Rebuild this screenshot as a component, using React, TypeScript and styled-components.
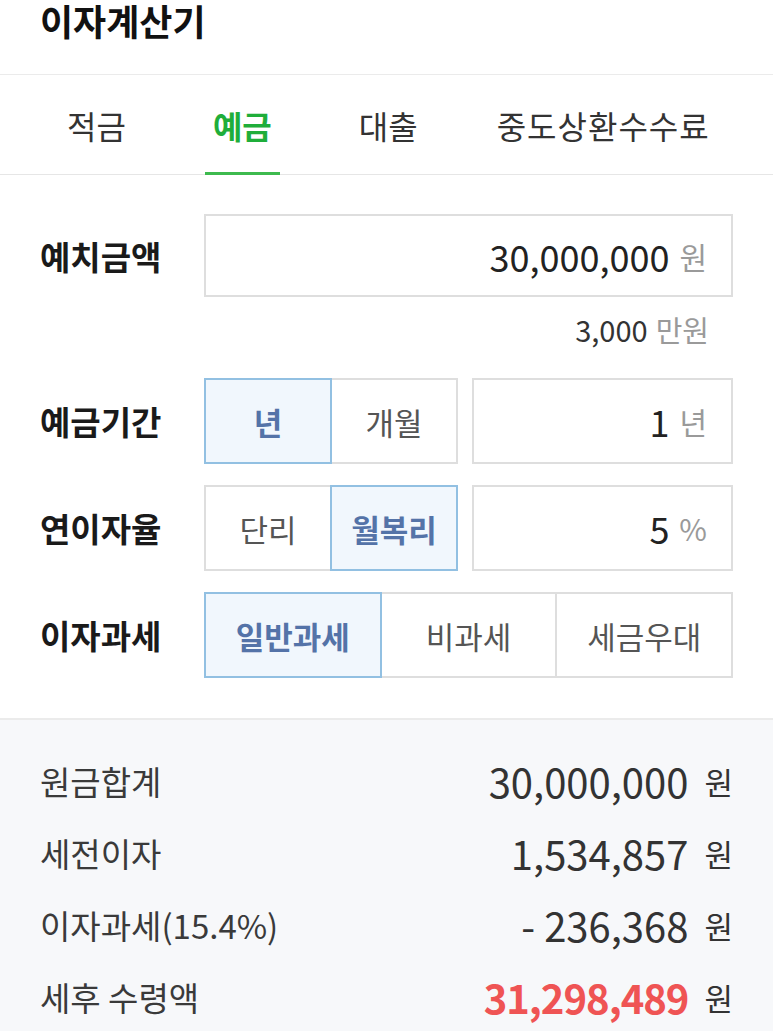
import React, { useState } from 'react';
import styled, { createGlobalStyle, css } from 'styled-components';

const GlobalStyle = createGlobalStyle`
  html, body {
    margin: 0;
    padding: 0;
    background: #ffffff;
  }
  body {
    font-family: 'Noto Sans CJK KR', 'Noto Sans', sans-serif;
    color: #333;
  }
  * {
    box-sizing: border-box;
  }
`;

const Page = styled.div`
  width: 773px;
  min-height: 1031px;
  background: #fff;
  display: flex;
  flex-direction: column;
`;

const Header = styled.div`
  height: 75px;
  padding: 0 40px;
  border-bottom: 1px solid #ebebeb;
  display: flex;
  align-items: flex-start;
`;

const Title = styled.h1`
  margin: 0;
  font-size: 36px;
  font-weight: 700;
  color: #111;
  line-height: 40px;
`;

const TabBar = styled.nav`
  height: 100px;
  display: flex;
  align-items: stretch;
  padding-left: 59px;
  gap: 71px;
  border-bottom: 1px solid #e6e6e6;
`;

const Tab = styled.div<{ $active?: boolean }>`
  display: flex;
  align-items: center;
  justify-content: center;
  padding: 0 8px;
  font-size: 32px;
  color: #333;
  position: relative;
  cursor: pointer;

  &:last-child {
    margin-left: -8px;
    letter-spacing: 1px;
  }

  ${(p) =>
    p.$active &&
    css`
      color: #1fae3a;
      font-weight: 700;
      &::after {
        content: '';
        position: absolute;
        left: 0;
        right: 0;
        bottom: -1px;
        height: 3px;
        background: #3dba4e;
      }
    `}
`;

const Form = styled.section`
  padding: 39px 40px 40px;
  display: flex;
  flex-direction: column;
`;

const Row = styled.div<{ $mt?: number }>`
  display: flex;
  align-items: center;
  margin-top: ${(p) => p.$mt ?? 0}px;
`;

const Label = styled.div`
  width: 164px;
  flex-shrink: 0;
  font-size: 33px;
  font-weight: 700;
  color: #1a1a1a;
`;

const Field = styled.div<{ $h?: number }>`
  height: ${(p) => p.$h ?? 86}px;
  flex: 1;
  border: 2px solid #dedede;
  display: flex;
  align-items: center;
  justify-content: flex-end;
  padding-right: 24px;
  gap: 10px;
  background: #fff;
`;

const Value = styled.span`
  font-size: 36px;
  color: #222;
`;

const Unit = styled.span`
  font-size: 30px;
  color: #9a9a9a;
`;

const Hint = styled.div`
  align-self: flex-end;
  margin-top: 14px;
  margin-right: 24px;
  display: flex;
  align-items: center;
  gap: 8px;
  height: 36px;
`;

const HintValue = styled.span`
  font-size: 29px;
  color: #333;
`;

const HintUnit = styled.span`
  font-size: 29px;
  color: #9a9a9a;
`;

const Toggles = styled.div<{ $w?: number }>`
  display: flex;
  height: 86px;
  ${(p) => (p.$w ? `width: ${p.$w}px;` : 'flex: 1;')}
  margin-right: ${(p) => (p.$w ? 14 : 0)}px;
`;

const Toggle = styled.div<{ $active?: boolean }>`
  flex: 1;
  display: flex;
  align-items: center;
  justify-content: center;
  font-size: 31px;
  color: #555;
  background: #fff;
  border: 2px solid #dedede;
  margin-left: -2px;
  position: relative;
  cursor: pointer;

  &:first-child {
    margin-left: 0;
  }

  ${(p) =>
    p.$active &&
    css`
      background: #f1f7fd;
      border-color: #92c0e2;
      color: #5473a8;
      font-weight: 700;
      z-index: 1;
    `}
`;

const Result = styled.section`
  flex: 1;
  background: #f7f8fa;
  border-top: 2px solid #ebebeb;
  padding: 25px 40px 0;
  display: flex;
  flex-direction: column;
`;

const ResultRow = styled.div`
  height: 72px;
  display: flex;
  align-items: center;
  justify-content: space-between;
`;

const ResultLabel = styled.div`
  font-size: 33px;
  color: #3a3a3a;
`;

const ResultValue = styled.div`
  display: flex;
  align-items: center;
  gap: 16px;
`;

const Amount = styled.span<{ $accent?: boolean }>`
  font-size: 40px;
  color: ${(p) => (p.$accent ? '#ef5454' : '#333')};
  font-weight: ${(p) => (p.$accent ? 700 : 400)};
  letter-spacing: ${(p) => (p.$accent ? -1 : 0)}px;
`;

const Won = styled.span`
  font-size: 31px;
  color: #333;
`;

const tabs = ['적금', '예금', '대출', '중도상환수수료'];

const results = [
  { label: '원금합계', value: '30,000,000' },
  { label: '세전이자', value: '1,534,857' },
  { label: '이자과세(15.4%)', value: '- 236,368' },
  { label: '세후 수령액', value: '31,298,489', accent: true },
];

const App = () => {
  const [tab, setTab] = useState(1);
  const [period, setPeriod] = useState('년');
  const [rate, setRate] = useState('월복리');
  const [tax, setTax] = useState('일반과세');

  return (
    <Page>
      <GlobalStyle />
      <Header>
        <Title>이자계산기</Title>
      </Header>

      <TabBar>
        {tabs.map((t, i) => (
          <Tab key={t} $active={tab === i} onClick={() => setTab(i)}>
            {t}
          </Tab>
        ))}
      </TabBar>

      <Form>
        <Row>
          <Label>예치금액</Label>
          <Field $h={83}>
            <Value>30,000,000</Value>
            <Unit>원</Unit>
          </Field>
        </Row>
        <Hint>
          <HintValue>3,000</HintValue>
          <HintUnit>만원</HintUnit>
        </Hint>

        <Row $mt={31}>
          <Label>예금기간</Label>
          <Toggles $w={254}>
            {['년', '개월'].map((t) => (
              <Toggle key={t} $active={period === t} onClick={() => setPeriod(t)}>
                {t}
              </Toggle>
            ))}
          </Toggles>
          <Field>
            <Value>1</Value>
            <Unit>년</Unit>
          </Field>
        </Row>

        <Row $mt={21}>
          <Label>연이자율</Label>
          <Toggles $w={254}>
            {['단리', '월복리'].map((t) => (
              <Toggle key={t} $active={rate === t} onClick={() => setRate(t)}>
                {t}
              </Toggle>
            ))}
          </Toggles>
          <Field>
            <Value>5</Value>
            <Unit>%</Unit>
          </Field>
        </Row>

        <Row $mt={21}>
          <Label>이자과세</Label>
          <Toggles>
            {['일반과세', '비과세', '세금우대'].map((t) => (
              <Toggle key={t} $active={tax === t} onClick={() => setTax(t)}>
                {t}
              </Toggle>
            ))}
          </Toggles>
        </Row>
      </Form>

      <Result>
        {results.map((r) => (
          <ResultRow key={r.label}>
            <ResultLabel>{r.label}</ResultLabel>
            <ResultValue>
              <Amount $accent={r.accent}>{r.value}</Amount>
              <Won>원</Won>
            </ResultValue>
          </ResultRow>
        ))}
      </Result>
    </Page>
  );
};

export default App;
